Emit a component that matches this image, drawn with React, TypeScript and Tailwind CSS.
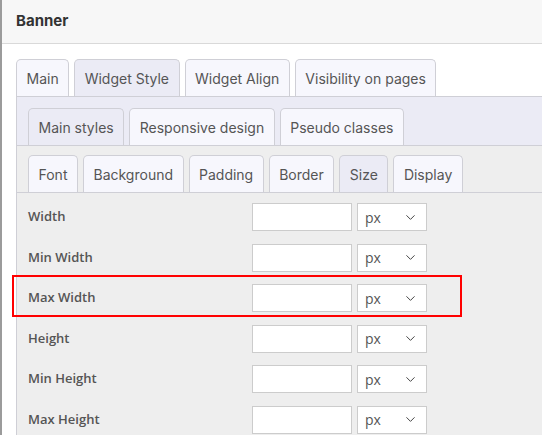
import { ChevronDown } from "lucide-react";

const outerTabs = ["Main", "Widget Style", "Widget Align", "Visibility on pages"];
const styleTabs = ["Main styles", "Responsive design", "Pseudo classes"];
const propTabs = ["Font", "Background", "Padding", "Border", "Size", "Display"];
const rows = ["Width", "Min Width", "Max Width", "Height", "Min Height", "Max Height"];

function Tab({ label, active }: { label: string; active?: boolean }) {
  return (
    <div
      className={`flex h-[37px] items-center rounded-t-[5px] border border-b-0 border-[#cfcfd6] px-[9.5px] text-[14px] text-[#555] ${
        active ? "bg-[#ebebf5]" : "bg-[#f7f7fd]"
      }`}
    >
      {label}
    </div>
  );
}

function SizeRow({ label }: { label: string }) {
  return (
    <div className="flex h-[28px] items-center">
      <div className="w-[224px] font-['Open_Sans',sans-serif] text-[13px] font-semibold text-[#555]">
        {label}
      </div>
      <div className="h-[28px] w-[100px] border border-[#cccccc] bg-white" />
      <div className="ml-[5px] flex h-[28px] w-[70px] items-center justify-between border border-[#cccccc] bg-white pl-[7px] pr-[8px]">
        <span className="font-['Open_Sans',sans-serif] text-[14px] text-[#555]">px</span>
        <ChevronDown className="h-[15px] w-[15px] text-[#444]" strokeWidth={1.6} />
      </div>
    </div>
  );
}

export default function App() {
  return (
    <div className="relative h-[435px] w-[542px] overflow-hidden border-l-2 border-[#9b9b9b] bg-white font-['Inter',sans-serif]">
      <div className="flex h-[44px] items-center border-b border-[#d9d9d9] bg-[#f7f7f7] pl-[14px] text-[15px] font-bold text-[#333]">
        Banner
      </div>

      <div className="pl-[14px] pt-[15px]">
        <div className="flex gap-[5px]">
          {outerTabs.map((t) => (
            <Tab key={t} label={t} active={t === "Widget Style"} />
          ))}
        </div>

        <div className="w-[560px] border-l border-t border-[#cfcfd6] bg-[#ebebf5]">
          <div className="flex gap-[5px] pl-[11px] pt-[11px]">
            {styleTabs.map((t) => (
              <Tab key={t} label={t} active={t === "Main styles"} />
            ))}
          </div>

          <div className="border-t border-[#cfcfd6] bg-[#eeeeee]">
            <div className="flex gap-[5px] pl-[11px] pt-[9px]">
              {propTabs.map((t) => (
                <Tab key={t} label={t} active={t === "Size"} />
              ))}
            </div>

            <div className="flex flex-col gap-[12.5px] border-t border-[#cfcfd6] pb-[20px] pl-[11px] pt-[10px]">
              {rows.map((r) => (
                <SizeRow key={r} label={r} />
              ))}
            </div>
          </div>
        </div>
      </div>

      <div className="pointer-events-none absolute left-[10px] top-[275px] h-[42px] w-[450px] border-2 border-[#ff0000]" />
    </div>
  );
}
